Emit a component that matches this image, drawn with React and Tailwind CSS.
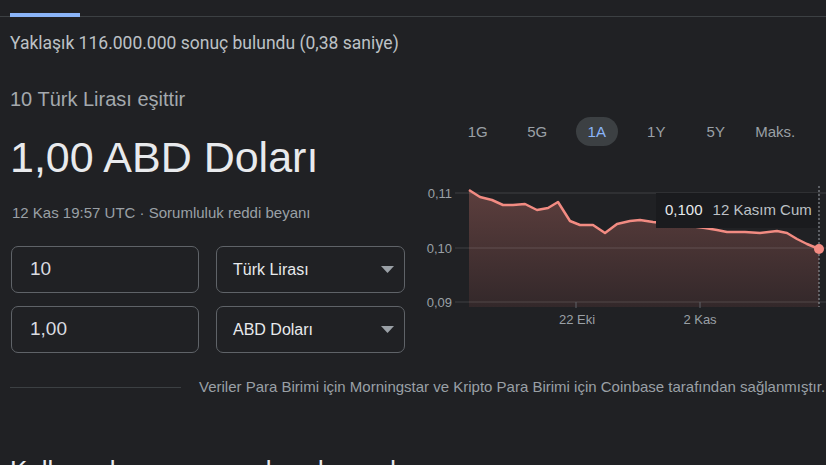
import React from 'react';

// Çizgi noktaları (sayfa koordinatları)
const points = [
  [469, 189], [480, 196], [492, 199], [503, 204], [513, 204], [525, 203],
  [537, 209], [548, 207], [558, 201], [570, 220], [580, 224], [593, 224],
  [605, 232], [617, 223], [630, 220], [640, 219], [653, 221], [670, 223],
  [690, 225], [705, 227], [717, 229], [727, 231], [745, 231], [760, 232],
  [777, 230], [787, 232], [797, 238], [807, 243], [819, 248],
];

const tabs = ['1G', '5G', '1A', '1Y', '5Y', 'Maks.'];

const AmountBox = ({ value }) => (
  <div className="w-[188px] h-[47px] border border-[#5f6368] rounded-[7px] flex items-center pl-[18px] text-[19px] text-[#dadce0]">
    {value}
  </div>
);

const SelectBox = ({ label }) => (
  <div className="w-[189px] h-[47px] border border-[#5f6368] rounded-[7px] flex items-center justify-between pl-[16px] pr-[10px] text-[16px] text-[#e8eaed]">
    <span>{label}</span>
    <svg width="13" height="7" viewBox="0 0 13 7">
      <polygon points="0,0 13,0 6.5,7" fill="#9aa0a6" />
    </svg>
  </div>
);

const Chart = () => {
  const line = points.map((p) => p.join(',')).join(' ');
  const area = `469,306 ${line} 819,306`;
  return (
    <div className="relative w-[406px] h-[150px] mt-[35px]">
      <svg width="406" height="150" viewBox="0 0 406 150">
        <defs>
          <linearGradient id="fill" x1="0" y1="0" x2="0" y2="1">
            <stop offset="0%" stopColor="#5c3e3d" />
            <stop offset="100%" stopColor="#33282a" />
          </linearGradient>
        </defs>
        <g transform="translate(-420,-180)">
          <polygon points={area} fill="url(#fill)" />
          {[192, 247, 301].map((y) => (
            <line key={y} x1="455" x2="826" y1={y} y2={y} stroke="rgba(255,255,255,0.14)" strokeWidth="1" />
          ))}
          <line x1="576" x2="576" y1="301" y2="307" stroke="#5f6368" />
          <line x1="700" x2="700" y1="301" y2="307" stroke="#5f6368" />
          <polyline points={line} fill="none" stroke="#f28b82" strokeWidth="2.5" strokeLinejoin="round" />
          <line x1="819" x2="819" y1="185" y2="306" stroke="#9aa0a6" strokeDasharray="2 2" strokeWidth="1" />
          <circle cx="819" cy="248" r="5" fill="#f28b82" />
          <g fontFamily="'Liberation Sans', Arial, sans-serif" fontSize="13" fill="#9aa0a6">
            <text x="452" y="197" textAnchor="end">0,11</text>
            <text x="452" y="252" textAnchor="end">0,10</text>
            <text x="452" y="306" textAnchor="end">0,09</text>
            <text x="577" y="323" textAnchor="middle">22 Eki</text>
            <text x="700" y="323" textAnchor="middle">2 Kas</text>
          </g>
        </g>
      </svg>
      <div className="absolute left-[236px] top-[12px] w-[162px] h-[35px] bg-[#1a1b1e] flex items-center gap-[10px] pl-[9px] text-[15px]">
        <span className="text-[#e8eaed]">0,100</span>
        <span className="text-[#bdc1c6]">12 Kasım Cum</span>
      </div>
    </div>
  );
};

const App = () => {
  return (
    <div className="w-[826px] h-[465px] overflow-hidden bg-[#202124] font-['Liberation_Sans',Arial,sans-serif]">
      {/* Sekme çizgisi */}
      <div className="h-[17px] pt-[13px] border-b border-[#3c4043]">
        <div className="relative ml-[10px] h-[4px] w-[70px] bg-[#8ab4f8]" />
      </div>

      <div className="mt-[16px] pl-[10px] text-[17.5px] leading-[20px] text-[#bdc1c6] font-['Roboto',sans-serif]">
        Yaklaşık 116.000.000 sonuç bulundu (0,38 saniye)
      </div>

      <div className="flex mt-[33px]">
        {/* Sol sütun */}
        <div className="w-[420px] pl-[10px]">
          <div className="text-[20px] leading-[26px] text-[#a4a9ae]">10 Türk Lirası eşittir</div>
          <div className="mt-[21px] text-[43px] leading-[48px] text-[#e8eaed]">1,00 ABD Doları</div>
          <div className="mt-[22px] text-[15px] leading-[20px] text-[#9aa0a6] pl-[2px]">
            12 Kas 19:57 UTC · Sorumluluk reddi beyanı
          </div>
          <div className="mt-[23px] pl-[1px] flex flex-col gap-[13px]">
            <div className="flex gap-[17px]">
              <AmountBox value="10" />
              <SelectBox label="Türk Lirası" />
            </div>
            <div className="flex gap-[17px]">
              <AmountBox value="1,00" />
              <SelectBox label="ABD Doları" />
            </div>
          </div>
        </div>

        {/* Sağ sütun: grafik */}
        <div className="w-[406px]">
          <div className="mt-[31px] ml-[28px] flex h-[29px]">
            {tabs.map((t) => (
              <div key={t} className="w-[59.5px] flex justify-center">
                <span
                  className={
                    t === '1A'
                      ? 'h-[29px] px-[12px] rounded-full bg-[#3c4043] text-[#8ab4f8] text-[15px] leading-[29px]'
                      : 'h-[29px] text-[#9aa0a6] text-[15px] leading-[29px]'
                  }
                >
                  {t}
                </span>
              </div>
            ))}
          </div>
          <Chart />
        </div>
      </div>

      <div className="mt-[24px] flex items-center">
        <div className="ml-[10px] w-[171px] h-px bg-[#3c4043]" />
        <div className="ml-[18px] text-[15px] leading-[20px] text-[#9aa0a6] whitespace-nowrap">
          Veriler Para Birimi için Morningstar ve Kripto Para Birimi için Coinbase tarafından sağlanmıştır.
        </div>
      </div>

      <div className="mt-[57px] pl-[10px] text-[26px] leading-[32px] text-[#e8eaed] whitespace-nowrap">
        Kullanıcılar ayrıca şunları da sordu
      </div>
    </div>
  );
};

export default App;
